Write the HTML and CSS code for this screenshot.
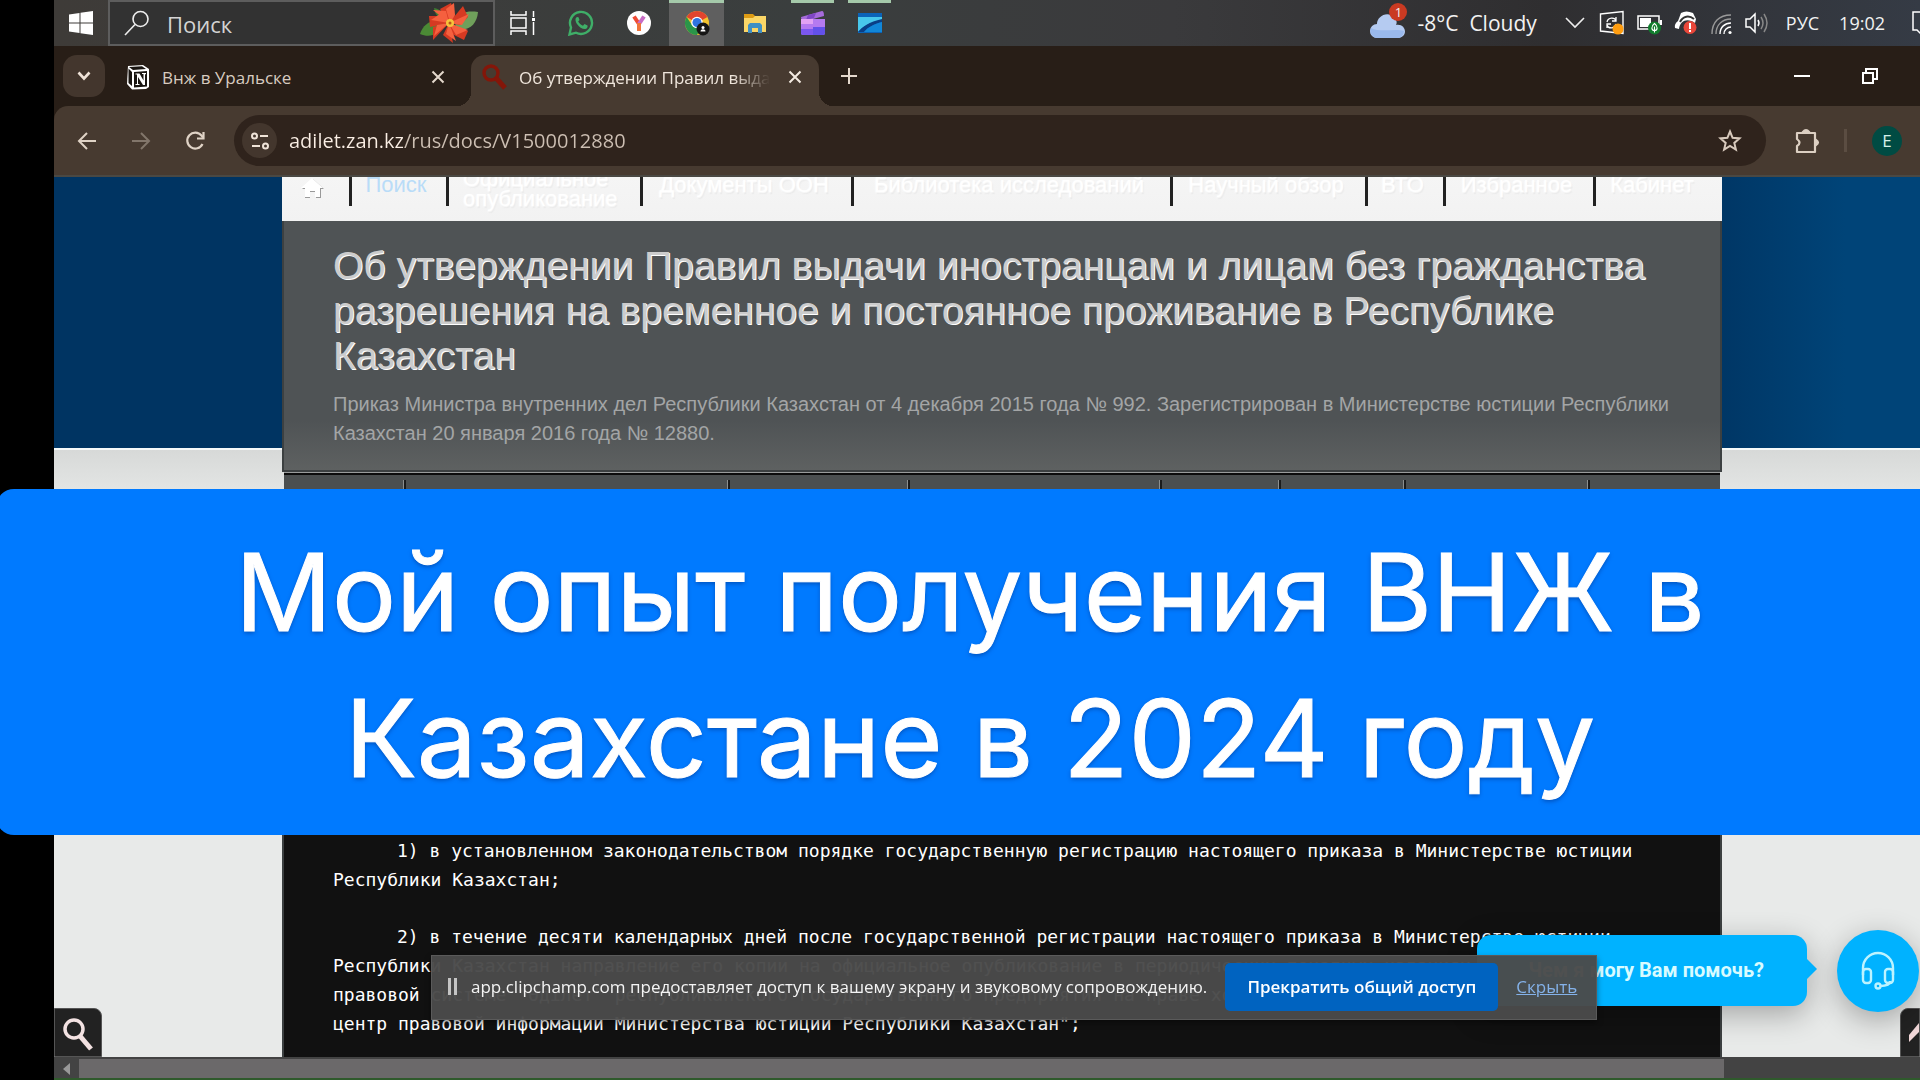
FILE: index.html
```html
<!doctype html>
<html lang="ru">
<head>
    <meta charset="UTF-8">
    <title>Об утверждении Правил выдачи</title>
    <link rel="stylesheet" href="styles.css">
</head>

<body>
<div class="desktop">
    <div class="taskbar">
        <button class="start" aria-label="Пуск">
            <svg width="24" height="24" viewBox="0 0 24 24" fill="#fff"><path d="M0 3.400l10.500-1.500v9.600H0zM11.500 1.700L24 0v11.500H11.500zM0 12.500h10.500v9.600L0 20.600zM11.500 12.500H24V24l-12.500-1.700z"/></svg>
        </button>
        <div class="search">
            <svg width="26" height="26" viewBox="0 0 26 26" fill="none" stroke="#eee" stroke-width="1.600"><circle cx="16.500" cy="9" r="7.500"/><path d="M11 14.500L1 25"/></svg>
            <input type="text" placeholder="Поиск" aria-label="Поиск">
            <svg width="60" height="40" viewBox="0 0 60 40">
                <path d="M24 20C16 14 4 20 1 31c9 4 19 1 24-8z" fill="#4b8a35"/>
                <path d="M36 18c5-10 14-10 23-9-1 12-9 20-22 17z" fill="#6fa05b"/>
                <path d="M15 5c6 1 12 6 14 13-8-1-13-5-14-13z" fill="#3f7d31"/>
                <g fill="#d63a22"><path d="M30 20L21 6l11-6 4 14z"/><path d="M30 20L44 3l5 11-8 8z"/><path d="M30 20l19 8-4 9-12-6z"/><path d="M30 20l4 20-10-8z"/><path d="M30 20L14 37l0-13z"/><path d="M30 20L11 24l-1-11 12 0z"/></g>
                <g fill="#f5603f"><path d="M31 20l-4-14 8-6 1 12z"/><path d="M30 20L14 7l13 1z"/><path d="M30 20L50 11l-7 11z"/><path d="M30 20l19 7-12 5z"/><path d="M30 20l7 18-10-7z"/><path d="M30 20l-15 13 3-11z"/><path d="M30 20l-18-3 9-6z"/></g>
                <circle cx="31" cy="20" r="4" fill="#f6c33b"/><circle cx="31" cy="20" r="1.500" fill="#b8551c"/>
            </svg>
        </div>
        <div class="apps">
            <button class="app" aria-label="Представление задач">
                <svg width="26" height="26" viewBox="0 0 26 26" fill="none" stroke="#fff" stroke-width="1.500"><path d="M1 1v4h15V1M1 25v-4h15v4M1 8h15v10H1zM23.500 1v6M23.500 12v13"/><path d="M22 8h3v3h-3z" fill="#fff" stroke="none"/></svg>
            </button>
            <button class="app" aria-label="WhatsApp">
                <svg width="26" height="26" viewBox="0 0 26 26"><path d="M3 17.500A11 11 0 1 1 8 22.700L1.500 24.500z" fill="none" stroke="#3fae68" stroke-width="2.400"/><path d="M9 7c-2 1-2 4 0 7s5 5 8 5c2 0 3-2 2.500-3.500L16.500 14l-1.500 1.800c-2-.8-4-2.500-4.800-4.300L11.500 10l-1-2.800z" fill="#3fae68"/></svg>
            </button>
            <button class="app" aria-label="Яндекс">
                <svg width="26" height="26" viewBox="0 0 26 26"><circle cx="13" cy="13" r="12" fill="#fff"/><path d="M13 21v-7L8 6.500" fill="none" stroke="#ee4b35" stroke-width="4"/><path d="M13 14l5-7.500" stroke="#c86cc4" stroke-width="4"/><path d="M13 21v-8" stroke="#f0743a" stroke-width="4"/></svg>
            </button>
            <button class="app app-open app-current" aria-label="Google Chrome">
                <svg width="26" height="26" viewBox="0 0 26 26"><circle cx="13" cy="13" r="12" fill="#f3c32f"/><path d="M13 13L2.600 7A12 12 0 0 1 23.400 7z" fill="#e1442f"/><path d="M2.600 7A12 12 0 0 0 13 25l5-9-10-1z" fill="#2a9549"/><circle cx="13" cy="12.500" r="5.800" fill="#fff"/><circle cx="13" cy="12.500" r="4.500" fill="#2f74e0"/><circle cx="19" cy="19" r="6.500" fill="#161616"/><circle cx="19" cy="17.600" r="1.500" fill="#fff"/><path d="M16.500 21.500c0-3 5-3 5 0z" fill="#fff"/></svg>
            </button>
            <button class="app" aria-label="Проводник">
                <svg width="26" height="26" viewBox="0 0 26 26"><path d="M2 4h9l2 2h10v5H2z" fill="#dd9b14"/><path d="M2 8h9l2-2h11v16H2z" fill="#fad667"/><path d="M6 23v-8l2-2h10l2 2v8h-4v-5h-6v5z" fill="#3f8fc4"/></svg>
            </button>
            <button class="app app-open app-narrow" aria-label="Clipchamp">
                <svg width="26" height="26" viewBox="0 0 26 26"><path d="M1 7L22 1q2 0 2 5L2 12z" fill="#a66bdc"/><path d="M8 5l8-2-2 5-8 2z" fill="#7f46c4"/><path d="M1 9h24v14q0 2-2 2H3q-2 0-2-2z" fill="#b57af0"/><path d="M1 9h12v5H1z" fill="#e2a2f4"/><path d="M1 19h12v6H3q-2 0-2-2z" fill="#7b57ef"/><path d="M13 17h12v6q0 2-2 2H13z" fill="#6351ea"/></svg>
            </button>
            <button class="app app-open app-narrow" aria-label="Видео">
                <svg width="26" height="26" viewBox="0 0 26 26"><path d="M1 3h24v20H1z" fill="#0b63b8"/><path d="M1 7h24v4C12 12 6 17 1 22z" fill="#48c8ec"/><path d="M25 9C12 12 5 17 1 22h6c4-5 10-8 18-10z" fill="#0a3f86"/><path d="M7 22h18V12C17 14 11 17 7 22z" fill="#1187d8"/></svg>
            </button>
        </div>
        <div class="tray">
            <span class="cloud">
                <svg width="38" height="30" viewBox="0 0 38 30"><path d="M8 29a7 7 0 0 1 0-14C8 7 19 1 26 9c2 3 2 5 1 7 10-2 13 12 2 13z" fill="#b5cbf1"/><path d="M8 29a7 7 0 0 1-6-10c10 5 24 0 33 3-1 6-4 7-6 7z" fill="#9ab9ec"/></svg>
                <b>1</b>
            </span>
            <span class="weather">-8°C&nbsp; Cloudy</span>
            <svg class="more" width="20" height="12" viewBox="0 0 20 12" fill="none" stroke="#eee" stroke-width="1.600"><path d="M1 1l9 9 9-9"/></svg>
            <svg width="27" height="26" viewBox="0 0 27 26" fill="none"><path d="M1.500 4L24 1.500v22L1.500 21z" stroke="#fff" stroke-width="1.400"/><path d="M8 12c1-5 8-5 9-1M17 7v4h-4M17 14c-1 5-8 5-9 1M8 18v-4h4" stroke="#fff" stroke-width="1.300"/><circle cx="19" cy="19" r="5.500" fill="#ff9d10"/></svg>
            <svg width="27" height="26" viewBox="0 0 27 26"><path d="M2 6h21v13H2z" fill="none" stroke="#fff" stroke-width="1.500"/><path d="M4 8h11v9H4zM24 10h2v5h-2z" fill="#fff"/><circle cx="18.500" cy="18" r="6.500" fill="#107c2c"/><path d="M18.500 22.500v-6M18.500 13.500c-4 3-3 7 0 7s4-4 0-7z" fill="none" stroke="#fff" stroke-width="1.100"/></svg>
            <svg width="27" height="26" viewBox="0 0 27 26"><path d="M8 3q5-3 12 0l3 6-1 4C15 8 7 10 6 19L2 18Q1 14 5 11z" fill="#fff"/><path d="M7 12c3-6 9-7 14-3" fill="none" stroke="#333" stroke-width="2"/><circle cx="17" cy="17.500" r="6.500" fill="#e9473a"/><path d="M16 13h2v6h-2zM16 20h2v2h-2z" fill="#fff"/></svg>
            <svg width="24" height="26" viewBox="0 0 24 26" fill="none" stroke-width="1.400"><path d="M2 24C2 12 9 5 21 5M6 24C6 15 12 9 21 9" stroke="#999"/><path d="M10 24c0-7 5-11 11-11M14 24c0-4 3-7 7-7" stroke="#fff"/><circle cx="20" cy="22.500" r="1.600" fill="#fff"/></svg>
            <svg width="26" height="26" viewBox="0 0 26 26" fill="none" stroke="#fff" stroke-width="1.500"><path d="M2 9h4l5-5v18l-5-5H2z"/><path d="M14 10q2 3 0 6"/><path d="M17 7q4 6 0 12M20 4q6 9 0 18" stroke="#888"/></svg>
            <span class="lang">РУС</span>
            <span class="clock">19:02</span>
            <svg width="8" height="26" viewBox="0 0 8 26" fill="none" stroke="#fff" stroke-width="1.500"><path d="M9 2H1v18h4l4 4"/></svg>
        </div>
    </div>

    <div class="tabs">
        <button class="tab-search" aria-label="Поиск вкладок">
            <svg width="14" height="10" viewBox="0 0 14 10" fill="none" stroke="#efe3d8" stroke-width="2.600"><path d="M1.500 1.500L7 7.500l5.500-6"/></svg>
        </button>
        <div class="tab">
            <svg width="24" height="26" viewBox="0 0 24 26"><path d="M2 2l15-1 6 4v18l-3 2-14 .5L1 20z" fill="#fff"/><path d="M3 3l13-.8L20 5 7 6zM2.500 4.500L6 8v14l-3.500-3z" fill="#181410"/><path d="M8 8l13-1v15.500L8 23.500z" fill="#181410"/><path d="M9.500 9.500h4l4 7V10H16V9h4v1.200h-1V21h-2l-5-8v7h1.500v1H9.500v-1H11V10.500H9.500z" fill="#fff"/></svg>
            <span class="tab-title">Внж в Уральске</span>
            <button aria-label="Закрыть вкладку"><svg width="14" height="14" viewBox="0 0 14 14" stroke="#e4d8cc" stroke-width="2"><path d="M1.500 1.500l11 11M12.500 1.500l-11 11"/></svg></button>
        </div>
        <div class="tab tab-active">
            <svg width="26" height="26" viewBox="0 0 26 26" fill="none" stroke="#841609"><circle cx="10" cy="9" r="7" stroke-width="3.400"/><path d="M15 14l9 10" stroke-width="5"/></svg>
            <span class="tab-title">Об утверждении Правил выдачи</span>
            <button aria-label="Закрыть вкладку"><svg width="14" height="14" viewBox="0 0 14 14" stroke="#f4ebe2" stroke-width="2"><path d="M1.500 1.500l11 11M12.500 1.500l-11 11"/></svg></button>
        </div>
        <button class="tab-new" aria-label="Новая вкладка"><svg width="16" height="16" viewBox="0 0 16 16" stroke="#e4d8cc" stroke-width="2"><path d="M8 0v16M0 8h16"/></svg></button>
        <div class="window-buttons">
            <button aria-label="Свернуть"><svg width="16" height="16" viewBox="0 0 16 16"><path d="M0 7h16v2H0z" fill="#fff"/></svg></button>
            <button aria-label="Восстановить"><svg width="16" height="16" viewBox="0 0 16 16" fill="none" stroke="#fff" stroke-width="2"><path d="M1 5h10v10H1zM4 4V1h11v10h-3"/></svg></button>
        </div>
    </div>

    <div class="toolbar">
        <button aria-label="Назад"><svg width="20" height="20" viewBox="0 0 20 20" fill="none" stroke="#e0d3c6" stroke-width="2"><path d="M19 10H2M10 2l-8 8 8 8"/></svg></button>
        <button aria-label="Вперёд"><svg width="20" height="20" viewBox="0 0 20 20" fill="none" stroke="#82766b" stroke-width="2"><path d="M1 10h17M10 2l8 8-8 8"/></svg></button>
        <button aria-label="Обновить"><svg width="20" height="20" viewBox="0 0 20 20" fill="none" stroke="#e0d3c6" stroke-width="2.200"><path d="M17.500 13a8 8 0 1 1-1-8.500L18 6.500"/><path d="M18.500 1v6.500H12"/></svg></button>
        <div class="omnibox">
            <button class="site-info" aria-label="Сведения о сайте"><svg width="20" height="20" viewBox="0 0 20 20" fill="none" stroke="#efe3d8" stroke-width="2"><circle cx="4.500" cy="5" r="2.500"/><path d="M10 5h8M2 15h8"/><circle cx="15.500" cy="15" r="2.500"/></svg></button>
            <input type="text" value="adilet.zan.kz/rus/docs/V1500012880" aria-label="Адрес">
            <button aria-label="Добавить в закладки"><svg width="24" height="24" viewBox="0 0 24 24" fill="none" stroke="#d8cabd" stroke-width="2"><path d="M12 2.500l2.600 6.300 6.900.6-5.200 4.500 1.600 6.700-5.900-3.600-5.900 3.600 1.600-6.700-5.200-4.500 6.900-.6z"/></svg></button>
        </div>
        <button class="ext" aria-label="Расширения"><svg width="26" height="26" viewBox="0 0 26 26" fill="none" stroke="#dccfc2" stroke-width="2.200"><path d="M3 5h18v19H3v-6q5-3 0-7z" stroke-linejoin="round"/><path d="M9 4q3-4 6 0zM22 12q4 2.500 0 5z" fill="#dccfc2"/></svg></button>
        <span class="divider"></span>
        <button class="avatar">E</button>
    </div>

    <main class="page">
        <div class="site">
            <nav class="menu">
                <ul>
                    <li><a href="#" aria-label="Главная"><svg width="24" height="24" viewBox="0 0 24 24"><path d="M12 3l11 10h-3v9h-5v-6H9v6H4v-9H1z" fill="#999"/><path d="M11 2l11 10h-3v9h-5v-6H9v6H4v-9H0z" fill="#fff"/></svg></a></li>
                    <li><a href="#" class="here">Поиск</a></li>
                    <li class="tall"><a href="#">Официальное опубликование</a></li>
                    <li><a href="#">Документы ООН</a></li>
                    <li><a href="#">Библиотека исследований</a></li>
                    <li><a href="#">Научный обзор</a></li>
                    <li><a href="#">ВТО</a></li>
                    <li><a href="#">Избранное</a></li>
                    <li><a href="#">Кабинет</a></li>
                </ul>
            </nav>
            <header class="doc-head">
                <h1>Об утверждении Правил выдачи иностранцам и лицам без гражданства разрешения на временное и постоянное проживание в Республике Казахстан</h1>
                <p>Приказ Министра внутренних дел Республики Казахстан от 4 декабря 2015 года № 992. Зарегистрирован в Министерстве юстиции Республики Казахстан 20 января 2016 года № 12880.</p>
            </header>
            <div class="doc-tabs"><i></i><i></i><i></i><i></i><i></i><i></i><i></i></div>
            <article class="doc-text">
                <p>1) в установленном законодательством порядке государственную регистрацию настоящего приказа в Министерстве юстиции<br>Республики Казахстан;</p>
                <p>2) в течение десяти календарных дней после государственной регистрации настоящего приказа в Министерстве юстиции<br>Республики Казахстан направление его копии на официальное опубликование в периодических печатных изданиях<br>правовой системе "Әділет" республиканского государственного предприятия на праве хозяйственного ведения<br>центр правовой информации Министерства юстиции Республики Казахстан";</p>
            </article>
        </div>
        <button class="corner corner-left" aria-label="Найти"><svg width="32" height="38" viewBox="0 0 32 38" fill="none" stroke="#f3e2e2"><ellipse cx="12" cy="15" rx="9" ry="9" stroke-width="3.500"/><path d="M18 22l11 13" stroke-width="5"/></svg></button>
        <button class="corner corner-right" aria-label="Наверх"><svg width="10" height="24" viewBox="0 0 10 24"><path d="M10 2L0 14v7l10-10z" fill="#f3d9da"/></svg></button>
        <div class="chat">Чем я могу Вам помочь?</div>
        <button class="chat-button" aria-label="Чат">
            <svg width="36" height="40" viewBox="0 0 36 40" fill="none" stroke="#bdf3ff" stroke-width="2.400"><path d="M3 24V17a15 15 0 0 1 30 0v7M30 30q0 5-10 5"/><rect x="3" y="18" width="8" height="14" rx="3"/><rect x="25" y="18" width="8" height="14" rx="3"/><circle cx="18" cy="35" r="2.500"/></svg>
        </button>
    </main>
    <div class="scroll">
        <button aria-label="Прокрутить влево"><svg width="8" height="12" viewBox="0 0 8 12"><path d="M7 0v12L0 6z" fill="#999"/></svg></button>
        <span class="thumb"></span>
    </div>
</div>

<div class="share">
    <span class="grip"></span>
    <span class="share-text">app.clipchamp.com предоставляет доступ к вашему экрану и звуковому сопровождению.</span>
    <button>Прекратить общий доступ</button>
    <a href="#">Скрыть</a>
</div>

<div class="caption">Мой опыт получения ВНЖ в<br>Казахстане в 2024 году</div>
</body>
</html>
```
FILE: styles.css
```css
* {
    box-sizing: border-box;
    padding: 0;
    margin: 0;
}

body {
    background: #000;
    font-family: "Open Sans", "Noto Sans", sans-serif;
    overflow: hidden;
    position: relative;
}

button {
    background: none;
    border: 0;
    font: inherit;
    display: flex;
    align-items: center;
    justify-content: center;
}

input {
    background: none;
    border: 0;
    outline: 0;
    flex: 1;
    min-width: 0;
    font: inherit;
}

svg {
    flex: none;
}

ul {
    list-style: none;
}

.desktop {
    margin-left: 54px;
    height: 100vh;
    display: flex;
    flex-direction: column;
}

/* taskbar */

.taskbar {
    height: 46px;
    flex: none;
    display: flex;
    background: linear-gradient(90deg, #3e3b38, #3a3e3e 40%, #3a3a3c 60%, #2f2e30 80%, #353b45);
    color: #f2f2f2;
}

.start {
    width: 54px;
}

.search {
    width: 387px;
    display: flex;
    align-items: center;
    padding: 0 14px;
    border: 2px solid #5d5d5d;
    background: #323232;
    font-size: 22px;
}

.search input {
    margin: 2px 0 0 17px;
}

.search input::placeholder {
    color: #d4d4d4;
}

.apps {
    display: flex;
}

.app {
    width: 55px;
    margin-right: 3px;
}

.app-open {
    border-top: 3px solid #a5c9aa;
    padding-bottom: 3px;
}

.app-current {
    background: #5f5f5f;
}

.app-narrow {
    width: 43px;
    margin: 0 8px 0 6px;
}

.tray {
    display: flex;
    align-items: center;
    gap: 10px;
    margin-left: auto;
    font-size: 18px;
}

.cloud {
    position: relative;
    display: flex;
    padding-top: 2px;
}

.cloud b {
    position: absolute;
    top: -4px;
    right: 0;
    width: 18px;
    height: 18px;
    border-radius: 9px;
    background: #c93a22;
    font-size: 13px;
    line-height: 18px;
    font-weight: normal;
    text-align: center;
}

.weather {
    font-size: 21px;
    margin-right: 18px;
}

.more {
    margin-right: 4px;
}

.lang {
    margin-left: 6px;
}

.clock {
    margin: 0 17px 0 10px;
}

/* browser */

.tabs {
    height: 60px;
    flex: none;
    display: flex;
    padding: 9px 42px 0 9px;
    background: #281e17;
    color: #d8ccc0;
    font-size: 17px;
}

.tab-search {
    width: 42px;
    height: 42px;
    border-radius: 14px;
    background: #43362d;
}

.tab {
    display: flex;
    align-items: center;
    gap: 12px;
    width: 366px;
    height: 51px;
    padding: 0 26px 7px 21px;
}

.tab-title {
    flex: 1;
    overflow: hidden;
    white-space: nowrap;
}

.tab-active {
    position: relative;
    width: 348px;
    padding: 0 17px 7px 10px;
    background: #473a30;
    border-radius: 14px 14px 0 0;
    color: #f0e6dc;
}

.tab-active .tab-title {
    margin-right: 6px;
    -webkit-mask-image: linear-gradient(90deg, #000 85%, transparent);
    mask-image: linear-gradient(90deg, #000 85%, transparent);
}

.tab-active::before,
.tab-active::after {
    content: "";
    position: absolute;
    bottom: 0;
    left: -14px;
    width: 14px;
    height: 14px;
    background: radial-gradient(circle at 0 0, transparent 14px, #473a30 14px);
}

.tab-active::after {
    left: 100%;
    background: radial-gradient(circle at 100% 0, transparent 14px, #473a30 14px);
}

.tab-new {
    width: 60px;
    height: 42px;
}

.window-buttons {
    display: flex;
    gap: 52px;
    margin-left: auto;
    height: 42px;
}

.toolbar {
    height: 71px;
    flex: none;
    display: flex;
    align-items: center;
    padding: 0 18px 0 23px;
    background: #473a30;
    border-bottom: 2px solid #4a4843;
    border-radius: 14px 0 0 0;
    box-shadow: -14px -14px 0 14px #281e17;
    clip-path: inset(0);
}

.toolbar > button {
    margin-right: 34px;
}

.toolbar > button:nth-child(3) {
    margin-right: 29px;
}

.omnibox {
    flex: 1;
    display: flex;
    align-items: center;
    height: 51px;
    padding: 0 24px 0 8px;
    border-radius: 26px;
    background: #2f231c;
    font-size: 20px;
}

.site-info {
    width: 35px;
    height: 35px;
    border-radius: 18px;
    background: #43362d;
}

.omnibox input {
    margin-left: 12px;
    background: linear-gradient(90deg, #fbefe5 114px, #cdbfb3 114px);
    -webkit-background-clip: text;
    background-clip: text;
    color: transparent;
}

.toolbar > .ext {
    margin: 0 24px 0 28px;
}

.divider {
    width: 3px;
    height: 23px;
    background: #5b4d42;
    margin-right: 25px;
}

.toolbar > .avatar {
    width: 30px;
    height: 30px;
    margin: 0;
    border-radius: 15px;
    background: #004b43;
    color: #d5efe9;
    font-size: 17px;
}

/* page */

.page {
    flex: 1;
    min-height: 0;
    position: relative;
    overflow: hidden;
    padding: 0 198px 0 228px;
    background: linear-gradient(90deg, #003462 0, #003462 88%, #004478 96%) 0 0 / 100% 271px no-repeat,
        linear-gradient(#f6fafa 2px, #d7d9d8 2px, #e8eae9 60px) 0 271px no-repeat;
}

.menu {
    height: 44px;
    overflow: hidden;
    background: linear-gradient(#f5f5f5, #f2f2f2);
    font: 22px "Liberation Sans", sans-serif;
}

.menu ul {
    display: grid;
    grid-template-columns: 70fr 97fr 194fr 211fr 319fr 195fr 78fr 150fr 126fr;
    margin-top: -8px;
}

.menu li {
    height: 37px;
    padding-right: 6px;
    border-right: 3px solid #222;
    text-align: center;
    line-height: 32px;
    white-space: nowrap;
}

.menu li:last-child {
    padding-right: 14px;
    border: 0;
}

.menu li.tall {
    padding: 0 14px;
    text-align: left;
    line-height: 20px;
    white-space: normal;
}

.menu svg {
    vertical-align: -8px;
}

.menu a {
    color: #fff;
    text-decoration: none;
    text-shadow: 0 1px 2px #fff, 1px 2px 1px #e6e6e6;
}

.menu a.here {
    color: #b9dcf8;
    text-shadow: none;
}

.doc-head {
    padding: 22px 49px;
    background: linear-gradient(#4f5355 80%, #5e6161);
    border: solid #3c4041;
    border-width: 0 2px 2px;
    font-family: "Liberation Sans", sans-serif;
}

.doc-head h1 {
    font-size: 39px;
    line-height: 45px;
    font-weight: normal;
    color: #ccc;
    text-shadow: 1px 1px 0 #fff;
    padding-right: 20px;
}

.doc-head p {
    margin-top: 12px;
    font-size: 20px;
    line-height: 29px;
    color: #a3a5a6;
}

.doc-tabs {
    display: grid;
    grid-template-columns: 122fr 324fr 180fr 253fr 119fr 125fr 184fr 130fr;
    height: 40px;
    padding-top: 7px;
    margin: 0 2px;
    border-top: 1px solid #9a9c9c;
    box-shadow: inset 0 2px #0c0c0c;
    background: #4b4f50;
}

.doc-tabs i {
    border-right: 2px solid #1b1c1c;
    box-shadow: inset -1px 0 #8c8f8f;
}

.doc-text {
    padding: 324px 30px 60px 49px;
    background: #111;
    border: solid #3c4041;
    border-width: 0 2px;
    color: #fff;
    font: 18px/29px "DejaVu Sans Mono", monospace;
    white-space: nowrap;
}

.doc-text p {
    text-indent: 64px;
    margin-bottom: 28px;
}

.corner {
    position: absolute;
    bottom: 0;
    height: 49px;
    background: #222;
    border: 1px solid #555;
}

.corner-left {
    left: 0;
    width: 48px;
    border-radius: 0 8px 0 0;
}

.corner-right {
    right: 0;
    width: 20px;
    border-radius: 8px 0 0 0;
    justify-content: flex-end;
}

.chat {
    position: absolute;
    right: 113px;
    bottom: 51px;
    width: 330px;
    height: 71px;
    padding-right: 43px;
    border-radius: 14px;
    background: #00b2ff;
    box-shadow: 0 8px 30px rgba(0, 0, 0, .3);
    color: #d9fbff;
    font: 700 20px/71px Roboto, sans-serif;
    text-align: right;
}

.chat::after {
    content: "";
    position: absolute;
    left: 100%;
    top: 24px;
    border: solid transparent;
    border-width: 10px 0 10px 10px;
    border-left-color: #00b2ff;
}

.chat-button {
    position: absolute;
    right: 1px;
    bottom: 45px;
    width: 82px;
    height: 82px;
    border-radius: 41px;
    background: #00b2ff;
    box-shadow: 0 8px 30px rgba(0, 0, 0, .3);
}

.scroll {
    height: 23px;
    flex: none;
    display: flex;
    padding-top: 2px;
    background: #434343;
    border-bottom: 2px solid #2f5a2c;
}

.scroll button {
    width: 25px;
}

.thumb {
    flex: 1;
    margin-right: 196px;
    background: #6b696a;
}

/* screen sharing bar */

.share {
    position: fixed;
    left: 431px;
    bottom: 60px;
    height: 65px;
    display: flex;
    align-items: center;
    padding: 0 19px 2px 16px;
    background: rgba(74, 74, 74, .97);
    border: 1px solid #5a5a5a;
    box-shadow: 0 3px 6px rgba(0, 0, 0, .4);
    color: #f4f4f4;
    font-size: 17px;
    white-space: nowrap;
}

.grip {
    width: 9px;
    height: 17px;
    margin-right: 14px;
    border: solid #c4c4c4;
    border-width: 0 3px;
}

.share button {
    width: 273px;
    height: 48px;
    margin: 0 18px;
    border-radius: 5px;
    background: #0063c0;
    color: #fff;
    font-weight: 600;
}

.share a {
    color: #84b2ea;
}

/* video caption */

.caption {
    position: absolute;
    top: 489px;
    left: -4px;
    right: -24px;
    height: 346px;
    padding-top: 30px;
    border-radius: 18px;
    background: #007aff;
    color: #fff;
    font: 107px/146px Inter, sans-serif;
    text-align: center;
    text-shadow: 0 2px 4px rgba(0, 40, 120, .5);
    -webkit-text-stroke: 1px #fff;
}
```
